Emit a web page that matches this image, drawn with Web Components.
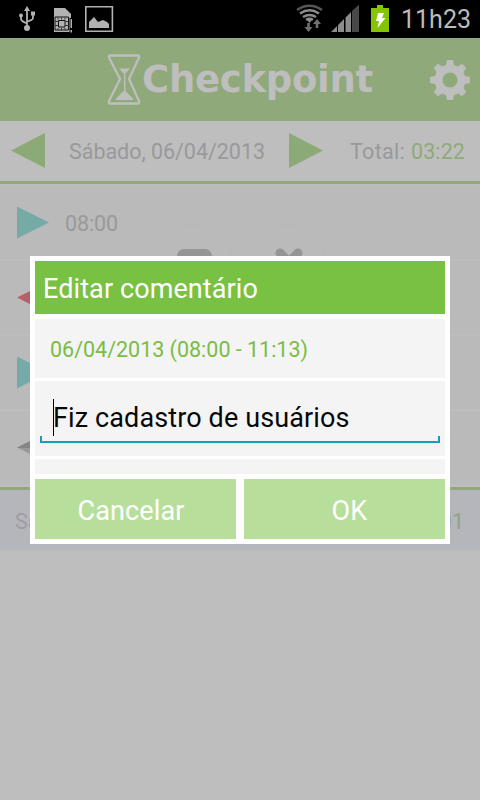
<!DOCTYPE html>
<html lang="pt-BR"><head><meta charset="utf-8"><title>Checkpoint</title>
<style>html,body{margin:0;width:480px;height:800px;overflow:hidden;background:#bebebe;font-family:Roboto,"Noto Sans",sans-serif}</style></head>
<body><checkpoint-app></checkpoint-app>
<script>
const define=(name,html,init)=>customElements.define(name,class extends HTMLElement{
  connectedCallback(){ if(this.shadowRoot)return; this.attachShadow({mode:'open'}).innerHTML=html; if(init)init.call(this); }
});

/* Single line of text spaced out to a given advance width */
define('fit-text','<style>:host{display:block;flex:none;white-space:pre;line-height:1.2}span{display:inline-block}</style><span><slot></slot></span>',function(){
  const w=+this.getAttribute('w'),s=this.shadowRoot.querySelector('span'),n=this.textContent.length;
  s.style.letterSpacing=(w-s.getBoundingClientRect().width)/n+'px';
});

define('status-bar',`<style>:host{display:flex;height:38px;background:#000;color:#bcbcbc;align-items:center}
svg{display:block;flex:none}fit-text{font-size:25px;line-height:30px;margin:2px 0 0 11px}</style>
<svg width="390" height="38" viewBox="0 0 390 38">
<g fill="none" stroke="#b2b2b2" stroke-width="1.8"><path d="M27 9V28M21 16v3q0 2 6 4.500M33 15v3q0 2-6 3.500"/></g>
<g fill="#b2b2b2"><path d="M24 11l3-5 3 5z"/><circle cx="27" cy="28" r="3"/><circle cx="21" cy="15.500" r="2"/><path d="M31 11.500h4v4h-4z"/>
<path d="M54 8h11l6 6v18H54z"/></g>
<path d="M55 17h13.500v13H55z" fill="#b2b2b2" stroke="#111" stroke-width="1"/><path d="M58 17.500v2M61.500 17.500v2M65 17.500v2M58 28v2M61.500 28v2M65 28v2M55 21.500h3M55 25.500h3M65.500 21.500h3M65.500 25.500h3" stroke="#333" stroke-width="1"/><path d="M58.500 20.500h6.500v6.500h-6.500z" fill="#b2b2b2" stroke="#111"/>
<path d="M69.500 18h3v15h-3z" fill="#000"/><path d="M70.500 19h1.500v9h-1.500zM70.500 30h1.500v2.500h-1.500z" fill="#b2b2b2"/>
<path d="M85.800 6.800h26.600v24.400H85.800z" fill="none" stroke="#b2b2b2" stroke-width="1.600"/><path d="M89 28v-6l2-2 3-3 4 5 5-2 4 2 2 2v4z" fill="#b2b2b2"/>
<g fill="none" stroke-width="2.400"><path d="M297 10Q309.500 1.500 322 10" stroke="#555"/><path d="M300 13.500q9.500-6.500 19 0M303 17q6.500-4 13 0M306 19.800q3.500-2 7 0" stroke="#8c8c8c"/></g>
<path d="M307 20h5l-2.500 3z" fill="#8c8c8c"/>
<path d="M307.200 23v4H304.500l4 5 4-5H309.800v-4zM315.700 28v-4H313l4-5 4 5H318.300v4z" fill="#707070"/>
<g fill="#8c8c8c"><path d="M331 32l6-6v6zM338 32v-7l6-6v13zM345.500 32V17.500l5.500-5.500v20z"/><path d="M352 32V11l7-6.500V32z" fill="#484848"/></g>
<path d="M377 5h6v3h6v24h-18V8h6z" fill="#84c400"/><path d="M378 13h6l-2 5h3.500l-8 10 1.500-7H376z" fill="#fff"/></svg>
<fit-text w="70">11h23</fit-text>`);

define('app-header',`<style>:host{display:flex;height:83px;background:#8fa97b;color:#bebebe;padding-left:106px;box-sizing:border-box;align-items:center}
svg{flex:none}fit-text{font:bold 37px/44px "DejaVu Sans",sans-serif;margin:1px 0 0 0}.gear{margin-left:56px}</style>
<svg width="36" height="54" viewBox="0 0 36 54"><path d="M4 2.500H32Q33.500 2.500 33 4.500L23 26 33 48Q34 50.500 32 50.500H4Q2 50.500 3 48L14 26 3 4.500Q2.500 2.500 4 2.500z" fill="none" stroke="#bebebe" stroke-width="2.300"/><path d="M13 15.500H24L20 20H17zM18 19h1.500v20H18zM18.500 37L27 45.500V47H10V45.500z" fill="#bebebe"/></svg>
<fit-text w="231">Checkpoint</fit-text>
<svg class="gear" width="42" height="42" viewBox="-21 -21 42 42"><g fill="#bebebe"><circle r="15.500"/><g id="t"></g></g><circle r="7.500" fill="#8fa97b"/></svg>`,function(){
  const g=this.shadowRoot.getElementById('t');
  for(let a=0;a<360;a+=45)g.innerHTML+='<path d="M-3 -20H3L4.500 -13H-4.500z" transform="rotate('+a+')"/>';
});

define('tri-mark',`<style>:host{display:block;flex:none;width:var(--w,34px);height:var(--h,35px);background:var(--fill,currentColor);clip-path:polygon(0 0,100% 50%,0 100%)}:host([left]){clip-path:polygon(100% 0,0 50%,100% 100%)}</style>`);

define('day-bar',`<style>:host{display:flex;height:60px;border-bottom:3px solid #8fa97b;background:#bebebe;color:#98999c;font-size:21.500px;align-items:center;padding-left:11px}
tri-mark{color:#8caa76;margin-top:-1px}.d{margin-left:24px}.n{margin-left:24px}.t{margin-left:27px}.v{color:#8faa78;margin-left:6px}fit-text{line-height:26px;margin-top:2px}</style>
<tri-mark left></tri-mark><fit-text class="d" w="196">Sábado, 06/04/2013</fit-text><tri-mark class="n"></tri-mark><fit-text class="t" w="55">Total:</fit-text><fit-text class="v" w="54">03:22</fit-text>`);

define('punch-row',`<style>:host{display:flex;height:73px;border-bottom:2px solid #bdbdbd;background:#bababa;align-items:center;padding-left:17px;gap:16px;color:#999;font-size:21.500px}
tri-mark{--w:32px;--h:32px;--fill:var(--mark)}::slotted(fit-text){line-height:26px!important;margin-top:3px}</style><tri-mark></tri-mark><slot></slot>`,function(){
  if(this.hasAttribute('left'))this.shadowRoot.querySelector('tri-mark').setAttribute('left','');
});

define('total-row',`<style>:host{display:flex;height:60px;margin-top:1px;border-top:3px solid #8fa97b;background:#b5b5bc;align-items:center;justify-content:space-between;padding:0 16px 0 15px;color:#9d9da2;font-size:21.500px}b{font-weight:400;color:#8fa47f}span,b{margin-top:2px}</style><span>Saldo</span><b>00:01</b>`);

define('action-bubbles',`<style>:host{position:absolute;left:150px;top:222px}svg{display:block}</style>
<svg width="180" height="80" viewBox="0 0 180 80"><g fill="#bababa" stroke="#b8b8b8"><circle cx="45" cy="40" r="37"/><circle cx="139" cy="40" r="37"/></g>
<rect x="27" y="27" width="35" height="26" rx="7" fill="#959595"/><path d="M130 31l18 18M148 31l-18 18" stroke="#959595" stroke-width="9" stroke-linecap="round"/></svg>`);

define('text-field',`<style>:host{display:block;width:400px;height:42px;margin-left:5px;position:relative;font-size:27px;color:#080808;box-sizing:border-box;border-bottom:2px solid #169fb9;padding:1px 0 0 13px}
:host::before,:host::after{content:"";position:absolute;bottom:0;width:2px;height:5px;background:#169fb9}:host::before{left:0}:host::after{right:0}
i{position:absolute;left:13px;top:-2px;width:1px;height:37px;background:#000}</style><i></i><slot></slot>`);

define('dialog-button',`<style>:host{display:flex;flex:1;height:60px;background:#b7df9b;color:#fff;font-size:27px;align-items:center;justify-content:center}</style><slot></slot>`);

define('comment-dialog',`<style>:host{position:absolute;left:30px;top:256px;width:420px;height:288px;box-sizing:border-box;background:#fff;padding:5px}
.h{display:flex;align-items:center;height:53px;background:#79c142;color:#fff;font-size:27px;padding-left:8px}
.b{background:#f4f4f4;box-sizing:border-box}.p{display:flex;align-items:center;height:59px;margin-top:5px;padding:3px 0 0 15px;color:#79bd45;font-size:21.500px}
.e{height:75px;margin-top:3px;padding-top:18px}.x{height:15px;margin-top:3px}.f{display:flex;gap:8px;margin-top:5px}.e text-field{margin-top:2px}.e fit-text{line-height:32px}.h fit-text,.f fit-text{line-height:32px;margin-top:3px}.p fit-text{line-height:26px;margin-top:0}.c{margin-left:-9px}.o{margin-left:10px}</style>
<div class="h"><fit-text w="215">Editar comentário</fit-text></div>
<div class="b p"><fit-text w="258">06/04/2013 (08:00 - 11:13)</fit-text></div>
<div class="b e"><text-field><fit-text w="296.500">Fiz cadastro de usuários</fit-text></text-field></div>
<div class="b x"></div>
<div class="f"><dialog-button><fit-text class="c" w="107">Cancelar</fit-text></dialog-button><dialog-button><fit-text class="o" w="36">OK</fit-text></dialog-button></div>`);

define('checkpoint-app',`<style>:host{display:flex;flex-direction:column;width:480px;height:800px;position:relative;overflow:hidden;background:#bebebe}.l{padding-top:2px;background:#bdbdbd}</style>
<status-bar></status-bar><app-header></app-header><day-bar></day-bar>
<div class="l"><punch-row style="--mark:#75aaa7"><fit-text w="53">08:00</fit-text></punch-row><punch-row left style="--mark:#b56068"></punch-row><punch-row style="--mark:#75aaa7"></punch-row><punch-row left style="--mark:linear-gradient(#858585 50%,#999 50%)"></punch-row></div>
<total-row></total-row><action-bubbles></action-bubbles><comment-dialog></comment-dialog>`);
</script></body></html>
